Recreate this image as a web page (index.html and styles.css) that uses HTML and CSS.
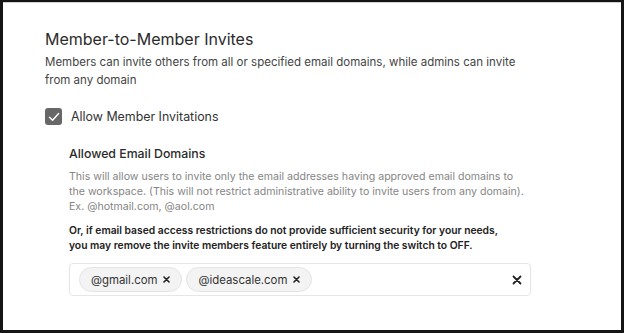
FILE: index.html
```html
<!DOCTYPE html>
<html lang="en">
<head>
  <meta charset="UTF-8" />
  <title>Member-to-Member Invites</title>
  <link rel="stylesheet" href="styles.css">
</head>
<body>
  <div class="frame">
    <div class="panel">
      <h2 class="title">Member-to-Member Invites</h2>
      <p class="lead">Members can invite others from all or specified email domains, while admins can invite from any domain</p>

      <label class="check-row">
        <span class="checkbox">
          <svg width="12" height="10" viewBox="0 0 12 10"><path d="M1.5 5.2 L4.6 8.2 L10.6 1.6" fill="none" stroke="#fff" stroke-width="1.5" stroke-linecap="round" stroke-linejoin="round"/></svg>
        </span>
        <span class="check-label">Allow Member Invitations</span>
      </label>

      <div class="domains">
        <h3 class="sub-title">Allowed Email Domains</h3>
        <p class="hint">This will allow users to invite only the email addresses having approved email domains to the workspace. (This will not restrict administrative ability to invite users from any domain). Ex. @hotmail.com, @aol.com</p>
        <p class="warn">Or, if email based access restrictions do not provide sufficient security for your needs, you may remove the invite members feature entirely by turning the switch to OFF.</p>

        <div class="tag-input">
          <div class="tags">
            <span class="tag">@gmail.com
              <svg class="tag-x" width="7" height="7" viewBox="0 0 7 7"><path d="M1 1 L6 6 M6 1 L1 6" stroke="#222" stroke-width="1.6" stroke-linecap="round"/></svg>
            </span>
            <span class="tag">@ideascale.com
              <svg class="tag-x" width="7" height="7" viewBox="0 0 7 7"><path d="M1 1 L6 6 M6 1 L1 6" stroke="#222" stroke-width="1.6" stroke-linecap="round"/></svg>
            </span>
          </div>
          <span class="clear">
            <svg width="10" height="10" viewBox="0 0 10 10"><path d="M1.5 1.5 L8.5 8.5 M8.5 1.5 L1.5 8.5" stroke="#222" stroke-width="1.8" stroke-linecap="round"/></svg>
          </span>
        </div>
      </div>
    </div>
  </div>
</body>
</html>
```

FILE: styles.css
```css
* {
  margin: 0;
  padding: 0;
  box-sizing: border-box;
}

body {
  background: #fff;
  color: #333;
  font-family: Inter, 'Noto Sans', sans-serif;
}

.frame {
  width: 624px;
  height: 333px;
  border: 3px solid #151515;
  border-top-width: 2px;
  box-shadow: inset 0 1px 0 #d0d0d0;
  background: #fff;
}

.panel {
  padding: 27px 0 0 42px;
}

.title {
  font-size: 16px;
  font-weight: 400;
  color: #2b2b2b;
  line-height: 20px;
}

.lead {
  margin-top: 4px;
  width: 476px;
  font-size: 11.5px;
  line-height: 18px;
  color: #444;
}

.check-row {
  display: flex;
  align-items: center;
  gap: 9px;
  margin-top: 19px;
  height: 17px;
}

.checkbox {
  width: 17px;
  height: 17px;
  border-radius: 3px;
  background: #676767;
  display: flex;
  align-items: center;
  justify-content: center;
}

.check-label {
  font-size: 12.4px;
  color: #333;
}

.domains {
  padding-left: 24px;
  margin-top: 21px;
}

.sub-title {
  font-size: 12.3px;
  font-weight: 500;
  color: #2b2b2b;
  line-height: 16px;
}

.hint {
  margin-top: 7px;
  width: 462px;
  font-size: 10.6px;
  line-height: 15px;
  color: #858585;
}

.warn {
  margin-top: 9px;
  width: 440px;
  font-size: 10.3px;
  line-height: 15px;
  font-weight: 600;
  color: #222;
}

.tag-input {
  margin-top: 10px;
  width: 462px;
  height: 33px;
  border: 1px solid #e6e6e6;
  border-radius: 4px;
  display: flex;
  align-items: center;
  justify-content: space-between;
  padding: 0 8px 0 9px;
}

.tags {
  display: flex;
  gap: 4px;
}

.tag {
  display: flex;
  align-items: center;
  gap: 6px;
  height: 25px;
  padding: 0 11px 0 11px;
  border: 1px solid #e4e4e4;
  border-radius: 13px;
  background: #f3f3f3;
  font-size: 11.4px;
  color: #333;
}

.clear {
  display: flex;
}
```
